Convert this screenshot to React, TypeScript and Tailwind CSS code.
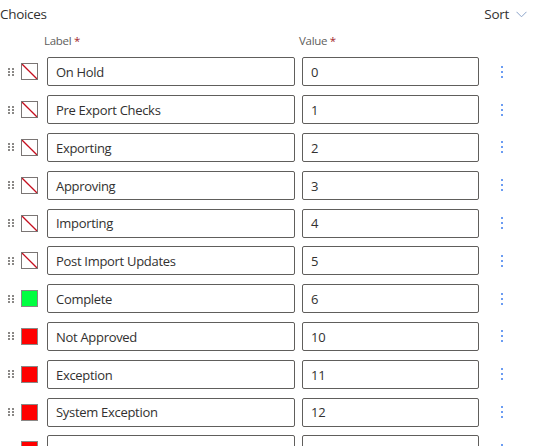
interface Choice {
  label: string;
  value: string;
  color: string | null;
}

const choices: Choice[] = [
  { label: 'On Hold', value: '0', color: null },
  { label: 'Pre Export Checks', value: '1', color: null },
  { label: 'Exporting', value: '2', color: null },
  { label: 'Approving', value: '3', color: null },
  { label: 'Importing', value: '4', color: null },
  { label: 'Post Import Updates', value: '5', color: null },
  { label: 'Complete', value: '6', color: '#00ff40' },
  { label: 'Not Approved', value: '10', color: '#ff0000' },
  { label: 'Exception', value: '11', color: '#ff0000' },
  { label: 'System Exception', value: '12', color: '#ff0000' },
  { label: 'Import Exception', value: '13', color: '#ff0000' },
];

function DragHandle() {
  return (
    <div className="grid grid-cols-2 gap-x-[2px] gap-y-[1px] w-[6px]">
      {[0, 1, 2, 3, 4, 5].map(i => (
        <span key={i} className="w-[2px] h-[2px] bg-[#8a8886]" />
      ))}
    </div>
  );
}

function Swatch({ color }: { color: string | null }) {
  if (color) {
    return <div className="w-[17px] h-[17px] border border-[#8a8886]" style={{ backgroundColor: color }} />;
  }
  return (
    <div className="w-[17px] h-[17px] border border-[#7a7574] bg-white">
      <svg width="15" height="15" viewBox="0 0 15 15" className="block">
        <line x1="0" y1="0" x2="15" y2="15" stroke="#c50f1f" strokeWidth="1.3" />
      </svg>
    </div>
  );
}

function Kebab() {
  return (
    <div className="flex flex-col gap-[3px] w-[2px]">
      <span className="w-[2px] h-[2px] bg-[#6b9cf2]" />
      <span className="w-[2px] h-[2px] bg-[#6b9cf2]" />
      <span className="w-[2px] h-[2px] bg-[#6b9cf2]" />
    </div>
  );
}

export default function App() {
  return (
    <div className="w-[533px] h-[446px] overflow-hidden bg-white text-[#323130] font-['Segoe_UI','Open_Sans',sans-serif] tracking-[-0.3px]">
      <div className="h-[28px] flex items-center justify-between pr-[6px]">
        <span className="text-[13.5px] text-[#323130]">Choices</span>
        <button className="flex items-center gap-[7px] text-[13.5px] text-[#323130]">
          Sort
          <svg width="11" height="7" viewBox="0 0 11 7" className="block">
            <polyline points="0.5,0.8 5.5,5.8 10.5,0.8" fill="none" stroke="#8ba3c9" strokeWidth="1" />
          </svg>
        </button>
      </div>
      <div className="h-[25px] flex items-center text-[11.5px] text-[#605e5c]">
        <span className="ml-[44px] w-[255px]">
          Label <span className="text-[#a4262c]">*</span>
        </span>
        <span>
          Value <span className="text-[#a4262c]">*</span>
        </span>
      </div>
      <div className="flex flex-col">
        {choices.map((c, i) => (
          <div key={i} className="h-[37.8px] flex items-center shrink-0">
            <div className="ml-[8px]">
              <DragHandle />
            </div>
            <div className="ml-[7px]">
              <Swatch color={c.color} />
            </div>
            <div className="ml-[9px] w-[248px] h-[29px] border border-[#605e5c] rounded-[2px] flex items-center px-[8px] pt-[2px] text-[13px]">
              {c.label}
            </div>
            <div className="ml-[7px] w-[177px] h-[29px] border border-[#605e5c] rounded-[2px] flex items-center px-[8px] pt-[2px] text-[13px]">
              {c.value}
            </div>
            <div className="ml-[22px]">
              <Kebab />
            </div>
          </div>
        ))}
      </div>
    </div>
  );
}
